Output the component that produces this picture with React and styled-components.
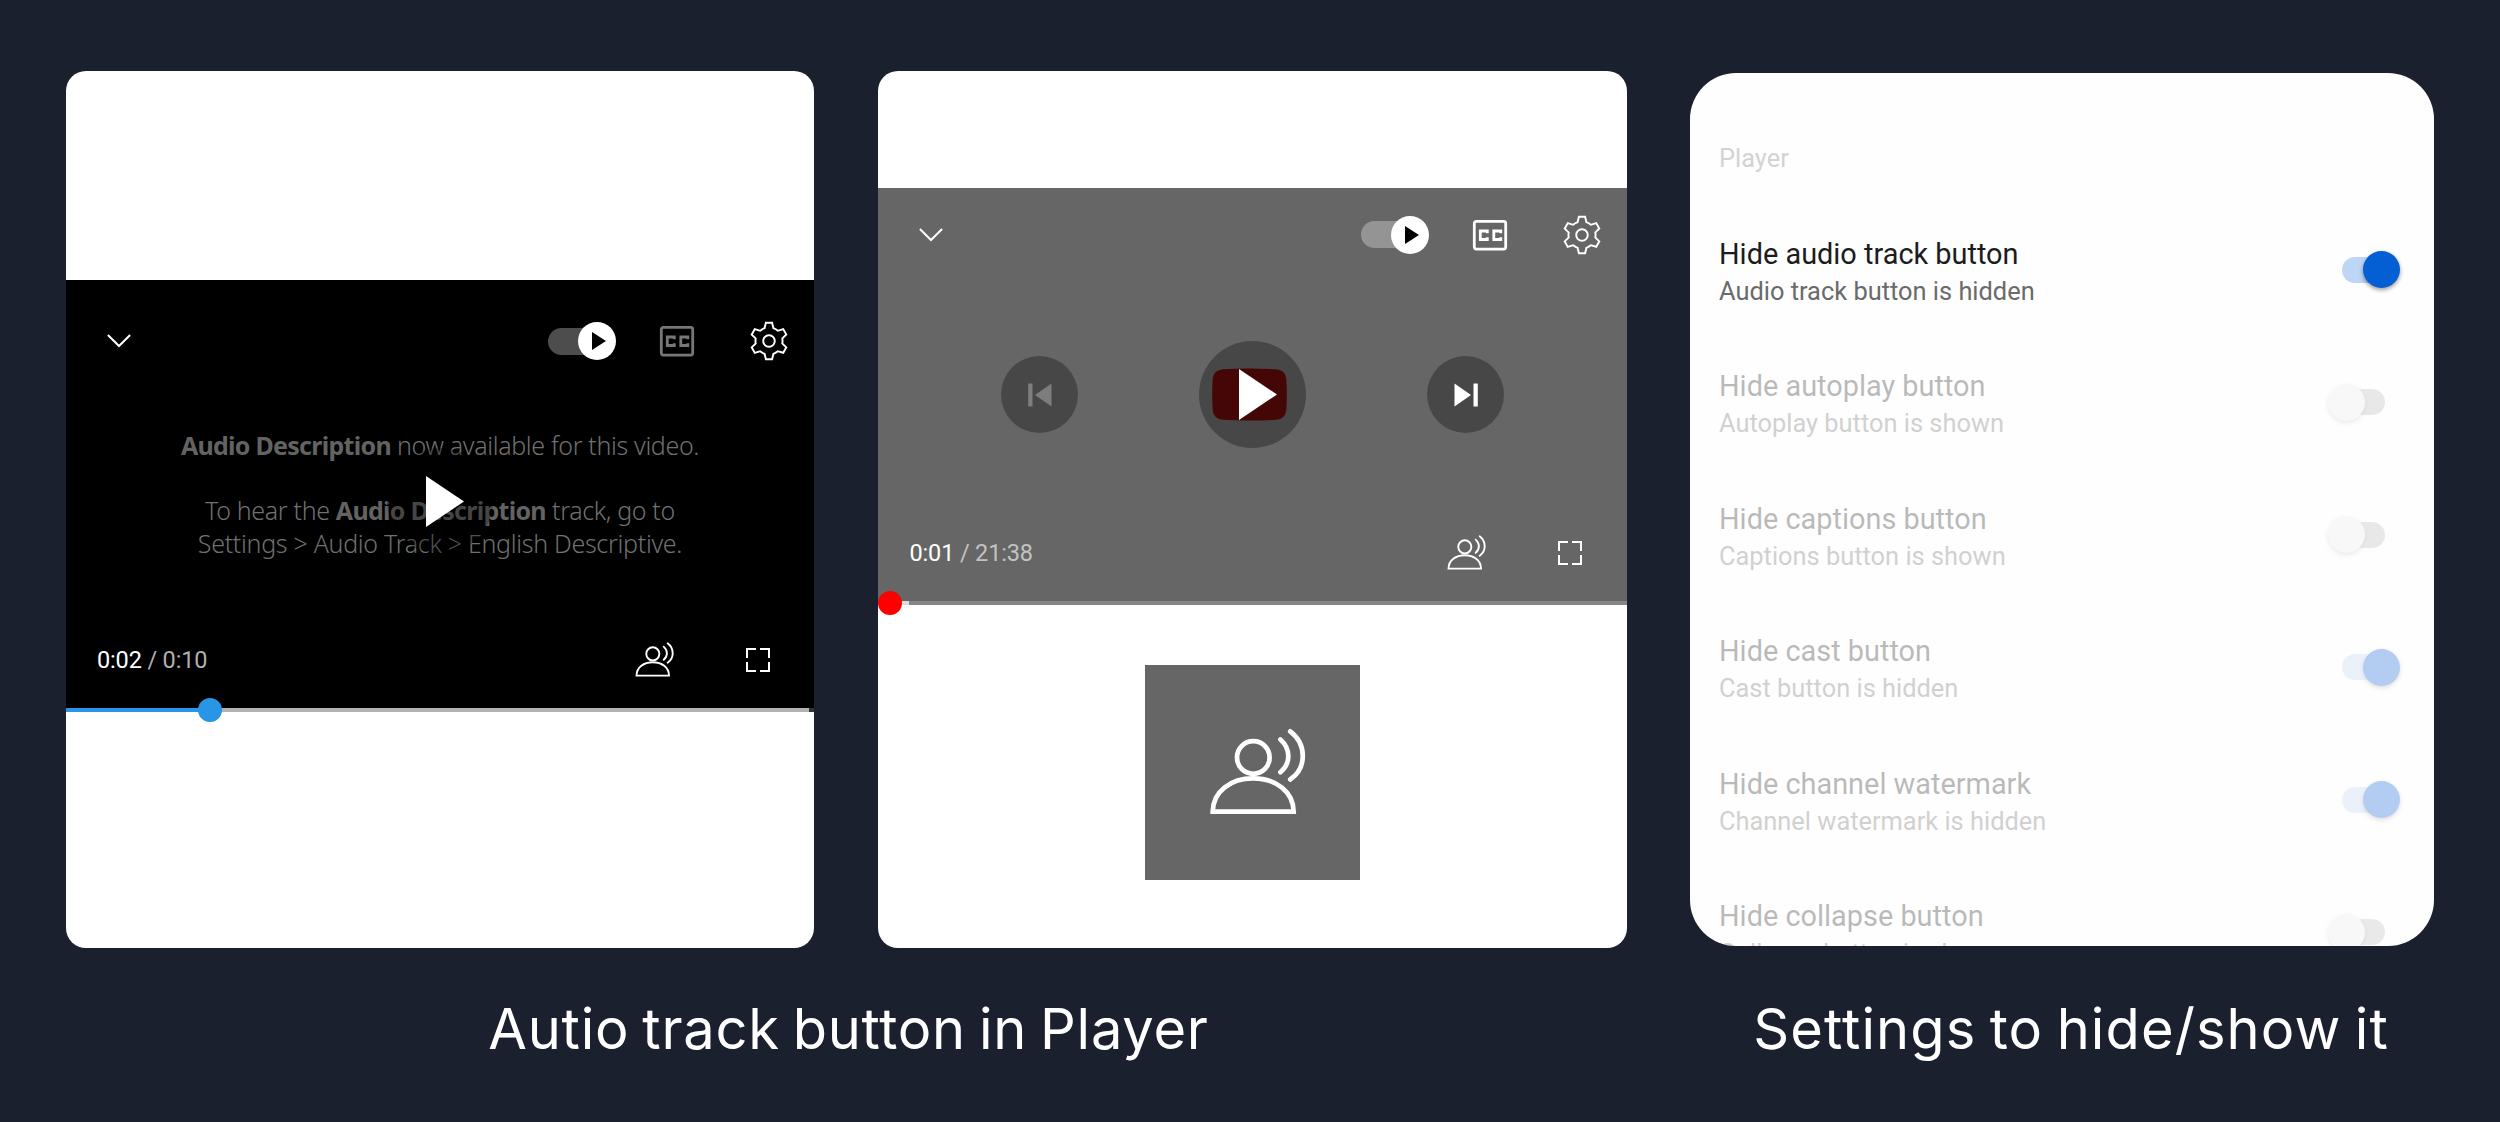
import React from "react";
import styled, { createGlobalStyle } from "styled-components";

const GlobalStyle = createGlobalStyle`
  * { box-sizing: border-box; }
  body { margin: 0; background: #1b202e; }
  svg { display: block; flex: none; overflow: visible; }
`;

const Page = styled.main`
  display: flex;
  align-items: flex-start;
  width: 2500px;
  height: 1122px;
  padding: 71px 0 0 66px;
  gap: 63px;
  background: #1b202e;
  overflow: hidden;
  font-family: Roboto, "Liberation Sans", sans-serif;
`;

const Group = styled.section`
  display: flex;
  flex-direction: column;
  align-items: center;
`;

const Screens = styled.div`
  display: flex;
  gap: 64px;
`;

const Caption = styled.h2`
  margin: ${(p) => p.$top}px 0 0 ${(p) => p.$shift}px;
  font: 400 56px/70px Inter, "Liberation Sans", sans-serif;
  letter-spacing: ${(p) => p.$tracking}px;
  word-spacing: -3.5px;
  color: #fff;
  white-space: nowrap;
`;

const Screen = styled.article`
  display: flex;
  flex-direction: column;
  align-items: center;
  width: ${(p) => p.$width}px;
  height: 877px;
  padding-top: ${(p) => p.$top}px;
  background: #fff;
  border-radius: 20px;
  overflow: hidden;
`;

const Video = styled.div`
  display: grid;
  grid-template-rows: ${(p) => p.$rows};
  width: 100%;
  background: ${(p) => p.$bg};
`;

const TopBar = styled.div`
  display: flex;
  align-items: center;
  padding: 0 22px 0 41px;
`;

const Autoplay = styled.div`
  display: flex;
  align-items: center;
  justify-content: flex-end;
  width: 68px;
  height: 27px;
  margin: 0 44px 0 auto;
  border-radius: 14px;
  background: linear-gradient(90deg, rgba(255, 255, 255, 0.3) 50px, transparent 50px);
`;

const AutoplayKnob = styled.div`
  display: grid;
  place-items: center;
  width: 38px;
  height: 38px;
  padding-left: 3px;
  border-radius: 50%;
  background: #fff;
`;

const GearIcon = styled.svg`
  margin-left: 52px;
  fill: #fff;
`;

const Stage = styled.div`
  display: grid;
  place-items: center;
  & > * { grid-area: 1 / 1; }
`;

const Subtitle = styled.p`
  margin: -14px 0 0;
  font: 300 25px/32.5px "Noto Sans", "Open Sans", sans-serif;
  color: #707070;
  text-align: center;
  white-space: pre;
  b { font-weight: 700; letter-spacing: -0.72px; color: #636363; }
`;

const Line = styled.span`
  display: block;
  height: 32.5px;
  letter-spacing: ${(p) => p.$tracking || -0.35}px;
`;

const Transport = styled.div`
  display: flex;
  align-items: center;
  gap: 121px;
`;

const RoundButton = styled.div`
  display: grid;
  place-items: center;
  width: ${(p) => p.$size}px;
  height: ${(p) => p.$size}px;
  border-radius: 50%;
  background: rgba(0, 0, 0, 0.3);
  color: ${(p) => p.$color || "#fff"};
  & > * { grid-area: 1 / 1; }
`;

const PlayIcon = styled.svg`
  margin-left: 10px;
  fill: #fff;
`;

const BadgeIcon = styled.svg`
  margin-left: -7px;
  fill: #450606;
`;

const BottomBar = styled.div`
  display: flex;
  align-items: center;
  gap: 72px;
  padding: ${(p) => p.$pad};
`;

const Time = styled.span`
  margin-right: auto;
  font-size: 23.5px;
  line-height: 28px;
  letter-spacing: -0.15px;
  color: ${(p) => p.$dim};
  b { font-weight: 400; color: #fff; }
`;

const Progress = styled.div`
  position: relative;
  height: 4px;
  background: ${(p) => p.$track};
`;

const Knob = styled.i`
  position: absolute;
  left: ${(p) => p.$x - 12}px;
  top: -10px;
  width: 24px;
  height: 24px;
  border-radius: 50%;
  background: ${(p) => p.$color};
`;

const IconTile = styled.div`
  display: grid;
  width: 215px;
  height: 215px;
  margin-top: 60px;
  padding: 63px 0 0 64px;
  background: #666;
`;

const Settings = styled.article`
  width: 744px;
  height: 873px;
  margin-top: 2px;
  padding: 68px 35px 0 29px;
  background: #fefefe;
  border-radius: 46px;
  overflow: hidden;
`;

const SectionTitle = styled.h3`
  margin: 0 0 28.5px;
  font-weight: 400;
  font-size: 25.4px;
  line-height: 34px;
  color: #d3d3d3;
`;

const Setting = styled.div`
  display: flex;
  align-items: center;
  justify-content: space-between;
  height: 132.5px;
  opacity: ${(p) => (p.$active ? 1 : 0.3)};
`;

const Labels = styled.div`
  padding-top: 4px;
  white-space: nowrap;
`;

const Name = styled.div`
  font-size: 28.9px;
  line-height: 38px;
  color: #1c1c1c;
`;

const Status = styled.div`
  font-size: 25.4px;
  line-height: 36px;
  color: #6a6a6a;
`;

const Track = styled.div`
  display: flex;
  align-items: center;
  justify-content: ${(p) => (p.$on ? "flex-end" : "flex-start")};
  width: 43px;
  height: 26px;
  margin-right: 14px;
  border-radius: 13px;
  background: ${(p) => (p.$on ? "#bed6f5" : "#b9b9b9")};
`;

const Thumb = styled.div`
  flex: none;
  width: 37px;
  height: 37px;
  margin: 0 -14.5px;
  border-radius: 50%;
  background: ${(p) => (p.$on ? "#055fd4" : "#ececec")};
  box-shadow: 0 2px 4px rgba(0, 0, 0, ${(p) => (p.$on ? 0.4 : 0.25)});
`;

const Chevron = () => (
  <svg width="24" height="14" viewBox="0 0 24 14" fill="none" stroke="#fff" strokeWidth="2">
    <path d="M.9 1 12 12 23.1 1" />
  </svg>
);

const Captions = ({ color }) => (
  <svg width="34" height="30" viewBox="0 0 34 30" fill="none" stroke={color} strokeWidth="2.8">
    <rect x="1.3" y="1.3" width="31.4" height="27.8" rx="2" />
    <path d="M14.3 13.3V11H7.3v8.5h7v-2.3M27.8 13.3V11h-7v8.5h7v-2.3" />
  </svg>
);

const Gear = () => (
  <GearIcon width="46" height="46" viewBox="0 0 24 24">
    <path d="M12 9.500c1.380 0 2.500 1.120 2.500 2.500s-1.120 2.500-2.500 2.500-2.500-1.120-2.500-2.500 1.120-2.500 2.500-2.500m0-1c-1.930 0-3.500 1.570-3.500 3.500s1.570 3.500 3.500 3.500 3.500-1.570 3.500-3.500-1.570-3.500-3.500-3.500zM13.220 3l.55 2.200.13.510.5.180c.61.230 1.190.560 1.720.980l.4.320.5-.14 2.170-.62 1.220 2.110-1.630 1.590-.37.360.080.510c.050.320.080.640.080.980s-.03.660-.08.980l-.08.510.370.360 1.630 1.590-1.220 2.110-2.170-.62-.5-.14-.4.320c-.53.430-1.110.760-1.720.980l-.5.180-.13.510-.55 2.240h-2.440l-.55-2.200-.13-.51-.5-.18c-.6-.23-1.180-.56-1.720-.99l-.4-.32-.5.140-2.170.620-1.210-2.120 1.630-1.590.370-.36-.08-.51c-.05-.32-.08-.65-.08-.98s.030-.66.080-.98l.080-.51-.37-.36L3.600 8.560l1.220-2.110 2.170.620.5.140.4-.32c.530-.44 1.110-.77 1.720-.99l.5-.18.130-.51.540-2.210h2.440M14 2h-4l-.74 2.960c-.73.270-1.400.660-2 1.140l-2.920-.83-2 3.460 2.190 2.130c-.06.370-.09.750-.09 1.140s.030.770.090 1.140l-2.190 2.130 2 3.460 2.920-.83c.6.480 1.270.870 2 1.140L10 22h4l.74-2.960c.730-.27 1.400-.66 2-1.140l2.920.830 2-3.460-2.190-2.130c.060-.37.090-.75.090-1.140s-.03-.77-.09-1.140l2.190-2.130-2-3.460-2.920.830c-.6-.48-1.270-.87-2-1.140L14 2z" />
  </GearIcon>
);

const Voice = ({ width, height }) => (
  <svg width={width} height={height} viewBox="64 63 98 88" fill="none" stroke="#fff" strokeWidth="4.7">
    <circle cx="108.3" cy="92.5" r="16.3" />
    <path d="M67.7 146.7C68 126 86 113.4 108.2 113.4S148.4 126 148.7 146.7Z" />
    <path strokeLinecap="round" d="M135.4 74.5C146 84 146 98.5 135.4 107.3M145.2 66.3C162 79 162 103 145.2 114.5" />
  </svg>
);

const Fullscreen = () => (
  <svg width="24" height="24" viewBox="0 0 24 24" fill="none" stroke="#fff" strokeWidth="2">
    <path d="M1 10V1h9M14 1h9v9M23 14v9h-9M10 23H1v-9" />
  </svg>
);

const PlayGlyph = () => (
  <PlayIcon width="38" height="51" viewBox="0 0 38 51">
    <path d="M0 0 38 25.5 0 51Z" />
  </PlayIcon>
);

const Badge = () => (
  <BadgeIcon width="75" height="53" viewBox="0 0 75 53">
    <path d="M11 1.2Q37 -.4 64 1.2 73.5 2 74.3 11 75.3 26 74.3 42 73.5 51 64 51.8 37 53.4 11 51.8 1.5 51 .7 42-.3 26 .7 11 1.5 2 11 1.2Z" />
  </BadgeIcon>
);

const Skip = ({ back }) => (
  <svg width="24" height="24" viewBox="0 0 24 24" fill="currentColor" transform={back ? "scale(-1 1)" : undefined}>
    <path d="M.5 .5 17 12 .5 23.5ZM19.5 .5h4.3v23h-4.3Z" />
  </svg>
);

const VideoTop = ({ cc }) => (
  <TopBar>
    <Chevron />
    <Autoplay>
      <AutoplayKnob>
        <svg width="14" height="18" viewBox="0 0 14 18"><path d="M0 0 14 9 0 18Z" /></svg>
      </AutoplayKnob>
    </Autoplay>
    <Captions color={cc} />
    <Gear />
  </TopBar>
);

const SETTINGS = [
  ["Hide audio track button", "Audio track button is hidden", true],
  ["Hide autoplay button", "Autoplay button is shown", false],
  ["Hide captions button", "Captions button is shown", false],
  ["Hide cast button", "Cast button is hidden", true],
  ["Hide channel watermark", "Channel watermark is hidden", true],
  ["Hide collapse button", "Collapse button is shown", false],
];

export default function App() {
  return (
    <>
      <GlobalStyle />
      <Page>
        <Group>
          <Screens>
            <Screen $top={209} $width={748}>
              <Video $bg="#000" $rows="122px 198px 108px 4px">
                <VideoTop cc="#777" />
                <Stage>
                  <Subtitle>
                    <Line><b>Audio Description</b> now available for this video.</Line>
                    <Line />
                    <Line>To hear the <b>Audio Description</b> track, go to</Line>
                    <Line $tracking={-0.3}>Settings &gt; Audio Track &gt; English Descriptive.</Line>
                  </Subtitle>
                  <RoundButton $size={106}><PlayGlyph /></RoundButton>
                </Stage>
                <BottomBar $pad="12px 44px 0 31px">
                  <Time $dim="#b0b0b0"><b>0:02</b> / 0:10</Time>
                  <Voice width={39.4} height={35.4} />
                  <Fullscreen />
                </BottomBar>
                <Progress $track="linear-gradient(90deg, #2895e7 144px, #b3b3b3 144px 743px, #333 743px)">
                  <Knob $x={144} $color="#2895e7" />
                </Progress>
              </Video>
            </Screen>
            <Screen $top={117} $width={749}>
              <Video $bg="#666" $rows="93px 227px 93px 4px">
                <VideoTop cc="#fff" />
                <Stage>
                  <Transport>
                    <RoundButton $size={77} $color="#7d7d7d"><Skip back /></RoundButton>
                    <RoundButton $size={107}><Badge /><PlayGlyph /></RoundButton>
                    <RoundButton $size={77}><Skip /></RoundButton>
                  </Transport>
                </Stage>
                <BottomBar $pad="0 45px 3px 31.5px">
                  <Time $dim="#c2c2c2"><b>0:01</b> / 21:38</Time>
                  <Voice width={39.4} height={35.4} />
                  <Fullscreen />
                </BottomBar>
                <Progress $track="linear-gradient(90deg, #ddd 31px, #858585 31px)">
                  <Knob $x={12} $color="#f00" />
                </Progress>
              </Video>
              <IconTile><Voice width={98} height={88} /></IconTile>
            </Screen>
          </Screens>
          <Caption $top={46} $shift={4} $tracking={0.75}>Autio track button in Player</Caption>
        </Group>
        <Group>
          <Settings>
            <SectionTitle>Player</SectionTitle>
            {SETTINGS.map(([name, status, on], i) => (
              <Setting key={name} $active={i === 0}>
                <Labels>
                  <Name>{name}</Name>
                  <Status>{status}</Status>
                </Labels>
                <Track $on={on}><Thumb $on={on} /></Track>
              </Setting>
            ))}
          </Settings>
          <Caption $top={48} $shift={18} $tracking={1.1}>Settings to hide/show it</Caption>
        </Group>
      </Page>
    </>
  );
}
